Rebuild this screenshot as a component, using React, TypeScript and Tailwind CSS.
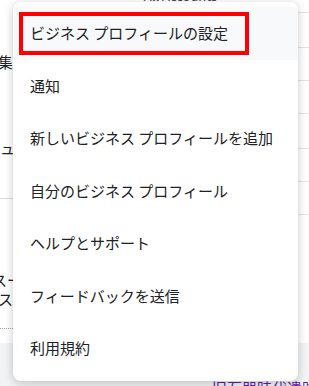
import React from "react";

const items = [
  "ビジネス プロフィールの設定",
  "通知",
  "新しいビジネス プロフィールを追加",
  "自分のビジネス プロフィール",
  "ヘルプとサポート",
  "フィードバックを送信",
  "利用規約",
];

const font = { fontFamily: '"Noto Sans CJK JP", "Noto Sans", sans-serif' };

function Frag({ text, shift = 0 }: { text: string; shift?: number }) {
  return (
    <div className="h-[18px] flex justify-end">
      <span
        className="text-[15px] leading-[18px] whitespace-nowrap shrink-0"
        style={{ marginRight: -shift }}
      >
        {text}
      </span>
    </div>
  );
}

export default function App() {
  return (
    <div
      className="relative w-[309px] h-[386px] overflow-hidden bg-white text-[#202124] flex flex-col"
      style={font}
    >
      {/* background page, mostly hidden behind the menu */}
      <div className="h-[343px] flex shrink-0">
        <div className="w-[13px] flex flex-col">
          <div className="h-[53px]" />
          <Frag text="編集:" shift={4} />
          <div className="h-[68px]" />
          <Frag text="レビュ" shift={2} />
          <div className="h-[42px] border-b border-[#dadce0]" />
          <div className="h-[72px]" />
          <Frag text="ステータスー" shift={9} />
          <div className="h-px" />
          <Frag text="ビジネス" />
          <div className="h-[21px] border-b border-dotted border-[#9aa0a6]" />
        </div>
        <div className="flex-1 flex justify-center overflow-hidden">
          <span className="mt-[-11px] ml-[50px] text-[13px] leading-[14px] text-[#3c4043] whitespace-nowrap">
            All Accounts
          </span>
        </div>
        <div className="w-[11px] flex flex-col">
          {[13, 35, 33, 33, 35, 33, 33].map((h, i) => (
            <div key={i} className="border-b border-[#e3e3e3] shrink-0" style={{ height: h }} />
          ))}
        </div>
      </div>
      <div className="flex-1 bg-[#f1f3f4] flex items-end pl-[212px] overflow-hidden">
        <span className="text-[15px] leading-[18px] mb-[-11px] whitespace-nowrap text-[#681da8]">
          旧石器時代遺跡園
        </span>
      </div>

      {/* dropdown menu overlay */}
      <div className="absolute left-[13px] top-[2px] w-[285px] h-[379px] bg-white rounded-[8px] shadow-[0_2px_10px_rgba(0,0,0,0.22)] pt-[5px] flex flex-col">
        {items.map((t, i) => (
          <div
            key={t}
            className={`h-[52.5px] shrink-0 flex items-center pl-[17px] text-[15px] leading-[20px] whitespace-nowrap ${
              i === 0 ? "bg-[#f8f9fa]" : ""
            }`}
          >
            {t}
          </div>
        ))}
        <div className="absolute left-[6px] top-[10px] w-[230px] h-[43px] border-[4px] border-[#ff0000]" />
      </div>
    </div>
  );
}
